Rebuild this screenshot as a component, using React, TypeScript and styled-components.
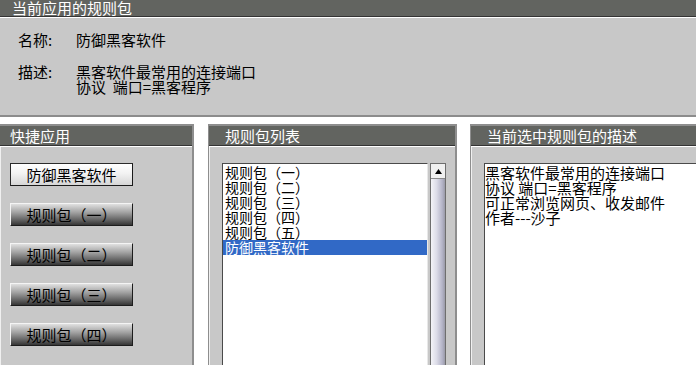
import React from "react";
import styled, { createGlobalStyle } from "styled-components";

const GlobalStyle = createGlobalStyle`
  html, body {
    margin: 0;
    padding: 0;
    background: #fff;
    overflow: hidden;
    font-family: "Noto Sans CJK SC", "DejaVu Sans", sans-serif;
  }
`;

const Page = styled.div`
  width: 696px;
  height: 365px;
  overflow: hidden;
  background: #fff;
`;

const TopPanel = styled.div`
  background: #c8c8c8;
  border-bottom: 2px solid #8c8c8c;
  height: 115px;
`;

const Header = styled.div<{ $indent: number; $height: number }>`
  height: ${(p) => p.$height}px;
  background: #626460;
  color: #fff;
  font-size: 15px;
  line-height: ${(p) => p.$height}px;
  padding-left: ${(p) => p.$indent}px;
  border-bottom: 1px solid #343434;
  box-shadow: 0 1px 0 #fff;
  white-space: nowrap;
`;

const InfoGrid = styled.div`
  display: grid;
  grid-template-columns: 58px auto;
  row-gap: 17px;
  padding: 15px 0 0 18px;
  font-size: 15px;
  line-height: 15px;
  color: #000;
`;

const Label = styled.div``;

const Value = styled.div``;

const Row = styled.div`
  display: flex;
  align-items: flex-start;
  margin-top: 7px;
`;

const Panel = styled.div<{ $width: number; $noLeft?: boolean }>`
  width: ${(p) => p.$width}px;
  flex: none;
  height: 250px;
  background: #c8c8c8;
  border: 2px solid #8e8e8e;
  border-left-width: ${(p) => (p.$noLeft ? 0 : 1)}px;
  border-bottom: none;
  box-sizing: border-box;
  box-shadow: inset 1px 0 0 #f0f0f0;
`;

const Gap = styled.div<{ $w: number }>`
  width: ${(p) => p.$w}px;
  flex: none;
`;

const ButtonColumn = styled.div`
  display: flex;
  flex-direction: column;
  gap: 17px;
  padding: 17px 0 0 10px;
`;

const QuickButton = styled.button<{ $light?: boolean }>`
  width: 123px;
  height: 23px;
  padding: 0;
  font-family: inherit;
  font-size: 15px;
  line-height: 21px;
  color: #000;
  text-align: center;
  cursor: pointer;
  border: 1px solid;
  border-color: ${(p) =>
    p.$light ? "#2a2a2a #1a1a1a #1a1a1a #2a2a2a" : "#f4f4f4 #1c1c1c #1c1c1c #f4f4f4"};
  background: ${(p) =>
    p.$light
      ? "linear-gradient(#ffffff, #f2f2f2 45%, #d6d6d6)"
      : "linear-gradient(#e0e0e0, #a2a2a2 40%, #646464 75%, #353535)"};
`;

const PanelBody = styled.div<{ $right?: number }>`
  display: flex;
  gap: 2px;
  padding: 17px ${(p) => p.$right ?? 0}px 0 13px;
`;

const ListBox = styled.div`
  flex: 1;
  height: 220px;
  background: #fff;
  border: 1px solid;
  border-color: #4a4a4a #e8e8e8 #e8e8e8 #4a4a4a;
  font-size: 14px;
  line-height: 15px;
  color: #000;
  padding-top: 1px;
  box-sizing: border-box;
  overflow: hidden;
`;

const ListItem = styled.div<{ $selected?: boolean }>`
  padding-left: 2px;
  white-space: nowrap;
  background: ${(p) => (p.$selected ? "#3169c6" : "transparent")};
  color: ${(p) => (p.$selected ? "#fff" : "#000")};
`;

const ScrollBar = styled.div`
  width: 16px;
  flex: none;
  height: 220px;
  border: 1px solid #6e6e6e;
  box-sizing: border-box;
  background: linear-gradient(90deg, #f4f4f8, #dcdce8 40%, #b4b4c8 80%, #9a9aa8);
  display: flex;
  flex-direction: column;
`;

const ArrowButton = styled.div`
  height: 14px;
  background: #f0f0f0;
  border-bottom: 1px solid #8a8a8a;
  display: flex;
  align-items: center;
  justify-content: center;
`;

const TextArea = styled.div`
  flex: 1;
  height: 220px;
  background: #fff;
  border: 1px solid;
  border-color: #4a4a4a #e8e8e8 #e8e8e8 #4a4a4a;
  font-size: 15px;
  line-height: 15px;
  color: #000;
  padding: 1px 0 0 0;
  white-space: nowrap;
  overflow: hidden;
`;

const listItems = ["规则包（一）", "规则包（二）", "规则包（三）", "规则包（四）", "规则包（五）", "防御黑客软件"];

const descLines = ["黑客软件最常用的连接端口", "协议 端口=黑客程序", "可正常浏览网页、收发邮件", "作者---沙子"];

export default function App() {
  return (
    <Page>
      <GlobalStyle />
      <TopPanel>
        <Header $indent={12} $height={16}>当前应用的规则包</Header>
        <InfoGrid>
          <Label>名称:</Label>
          <Value>防御黑客软件</Value>
          <Label>描述:</Label>
          <Value>
            黑客软件最常用的连接端口
            <br />
            协议&nbsp;&nbsp;端口=黑客程序
          </Value>
        </InfoGrid>
      </TopPanel>
      <Row>
        <Panel $width={194} $noLeft>
          <Header $indent={10} $height={19}>快捷应用</Header>
          <ButtonColumn>
            <QuickButton $light>防御黑客软件</QuickButton>
            <QuickButton>规则包（一）</QuickButton>
            <QuickButton>规则包（二）</QuickButton>
            <QuickButton>规则包（三）</QuickButton>
            <QuickButton>规则包（四）</QuickButton>
          </ButtonColumn>
        </Panel>
        <Gap $w={14} />
        <Panel $width={249}>
          <Header $indent={16} $height={19}>规则包列表</Header>
          <PanelBody $right={9}>
            <ListBox>
              {listItems.map((t, i) => (
                <ListItem key={t} $selected={i === listItems.length - 1}>
                  {t}
                </ListItem>
              ))}
            </ListBox>
            <ScrollBar>
              <ArrowButton>
                <svg width="7" height="5" viewBox="0 0 7 5">
                  <path d="M3.5 0 L7 5 L0 5 Z" fill="#000" />
                </svg>
              </ArrowButton>
            </ScrollBar>
          </PanelBody>
        </Panel>
        <Gap $w={13} />
        <Panel $width={250}>
          <Header $indent={16} $height={19}>当前选中规则包的描述</Header>
          <PanelBody>
            <TextArea>
              {descLines.map((l) => (
                <div key={l}>{l}</div>
              ))}
            </TextArea>
          </PanelBody>
        </Panel>
      </Row>
    </Page>
  );
}
